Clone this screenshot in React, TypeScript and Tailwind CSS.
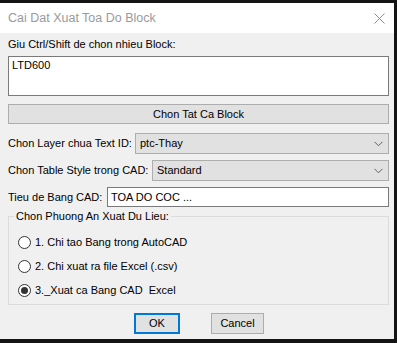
import React from "react";

const font = { fontFamily: '"Liberation Sans", Arial, sans-serif' };

function Chevron() {
  return (
    <svg width="9" height="6" viewBox="0 0 9 6" className="shrink-0">
      <path d="M0.5 0.8 L4.5 4.8 L8.5 0.8" fill="none" stroke="#606060" strokeWidth="1" />
    </svg>
  );
}

function Select({ value }: { value: string }) {
  return (
    <div className="flex-1 h-[21px] flex items-center justify-between bg-[#e1e1e1] border border-[#adadad] pl-[4px] pr-[5px]">
      <span>{value}</span>
      <Chevron />
    </div>
  );
}

function Radio({ label, checked }: { label: string; checked?: boolean }) {
  return (
    <div className="flex items-center h-[16px]">
      <div className="w-[13px] h-[13px] rounded-full border border-[#333] bg-white flex items-center justify-center ml-[9px]">
        {checked && <div className="w-[7px] h-[7px] rounded-full bg-[#333]" />}
      </div>
      <span className="ml-[4px] whitespace-pre">{label}</span>
    </div>
  );
}

export default function App() {
  return (
    <div className="w-[397px] h-[343px] overflow-hidden bg-[#141414] pt-[3px] pr-[3px] pb-[4px] flex flex-col text-[11px] text-black whitespace-nowrap" style={font}>
      {/* title bar */}
      <div className="h-[30px] shrink-0 bg-white flex items-center justify-between pl-[8px] pr-[9px]">
        <span className="text-[12.5px] text-[#9a9a9a]">Cai Dat Xuat Toa Do Block</span>
        <svg width="11" height="11" viewBox="0 0 11 11">
          <path d="M0.5 0.5 L10.5 10.5 M10.5 0.5 L0.5 10.5" stroke="#8c8c8c" strokeWidth="1" />
        </svg>
      </div>

      {/* body */}
      <div className="flex-1 min-h-0 bg-[#f0f0f0] pl-[8px] pr-[5px] flex flex-col">
        <div className="mt-[3px] h-[16px] leading-[16px]">Giu Ctrl/Shift de chon nhieu Block:</div>
        <div className="mt-[4px] h-[40px] shrink-0 bg-white border border-[#7a7a7a] px-[3px] pt-[1px] leading-[14px]">LTD600</div>

        <div className="mt-[8px] h-[20px] shrink-0 bg-[#e1e1e1] border border-[#adadad] flex items-center justify-center">
          Chon Tat Ca Block
        </div>

        <div className="mt-[9px] flex items-center">
          <span className="w-[127px] shrink-0">Chon Layer chua Text ID:</span>
          <Select value="ptc-Thay" />
        </div>
        <div className="mt-[6px] flex items-center">
          <span className="w-[144px] shrink-0">Chon Table Style trong CAD:</span>
          <Select value="Standard" />
        </div>
        <div className="mt-[6px] flex items-center">
          <span className="w-[99px] shrink-0">Tieu de Bang CAD:</span>
          <div className="flex-1 h-[20px] bg-white border border-[#7a7a7a] flex items-center px-[3px]">TOA DO COC ...</div>
        </div>

        <fieldset className="mt-[2px] h-[96px] shrink-0 border border-[#dcdcdc] flex flex-col">
          <legend className="ml-[5px] px-[2px] leading-[14px]">Chon Phuong An Xuat Du Lieu:</legend>
          <div className="mt-[11px] flex flex-col gap-[8px]">
            <Radio label="1. Chi tao Bang trong AutoCAD" />
            <Radio label="2. Chi xuat ra file Excel (.csv)" />
            <Radio label="3._Xuat ca Bang CAD  Excel" checked />
          </div>
        </fieldset>

        <div className="mt-[8px] flex">
          <div className="ml-[126px] w-[46px] h-[21px] bg-[#e1e1e1] border-2 border-[#0078d7] flex items-center justify-center">OK</div>
          <div className="ml-[31px] w-[53px] h-[21px] bg-[#e1e1e1] border border-[#adadad] flex items-center justify-center">Cancel</div>
        </div>
      </div>
    </div>
  );
}
